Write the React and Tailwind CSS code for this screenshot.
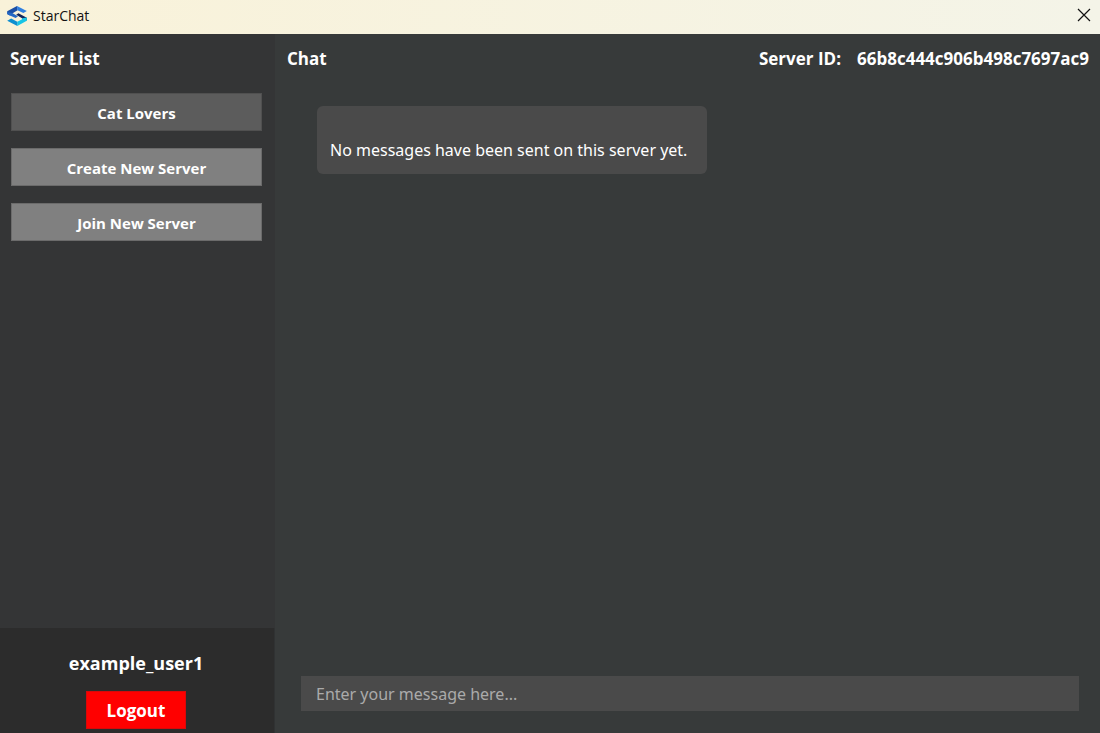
import { useState } from "react";

function Logo() {
  return (
    <svg viewBox="0 0 20 20" className="h-5 w-5" aria-hidden="true">
      <path d="M10 0L0.2 5.2V8L3 9.6L5.2 8.4V7.4L10.6 4.2Z" fill="#1c50a6" />
      <path d="M10 0L19.8 4.9L16.4 6.9L10.4 4.2Z" fill="#2f7fe0" />
      <path d="M0.2 6L5.2 7L11 10.2L8.6 12L0.6 8.4Z" fill="#2468c4" />
      <path d="M19.8 14.4V11.7L11.4 7.3L9.2 8.8L15.4 12.4V13.4Z" fill="#12265c" />
      <path d="M15.2 12.2L19.8 11.6V14.8L10.3 20V15.8L15.2 13.2Z" fill="#17c5e6" />
      <path d="M0.2 14.8L4.2 12.6L10.3 15.8V20Z" fill="#0e8fd0" />
    </svg>
  );
}

function TitleBar() {
  return (
    <header className="flex h-[34px] shrink-0 items-center justify-between bg-linear-to-r from-[#f9f2d9] to-[#f4f4e8] pl-[7px] pr-2 text-[#111111]">
      <div className="flex items-center gap-1.5 pb-0.5">
        <Logo />
        <span className="text-sm leading-5">StarChat</span>
      </div>
      <button type="button" aria-label="Close" className="pb-1">
        <svg viewBox="0 0 16 16" className="h-4 w-4" fill="none" stroke="currentColor" strokeWidth="1.2">
          <path d="M2 2L14 14M14 2L2 14" />
        </svg>
      </button>
    </header>
  );
}

function ServerButton({ label, active }) {
  return (
    <button
      type="button"
      className={`h-[38px] w-full border pt-0.5 text-[15px] font-bold ${
        active ? "border-[#505050] bg-[#5c5c5c]" : "border-[#6b6b6b] bg-[#808080]"
      }`}
    >
      {label}
    </button>
  );
}

function Sidebar() {
  return (
    <aside className="flex w-1/4 flex-col bg-[#343536]">
      <h2 className="px-2.5 pt-[13px] text-[17px] leading-6 font-bold">Server List</h2>
      <nav className="flex flex-col gap-[17px] pt-[22px] pr-[13px] pl-[11px]">
        <ServerButton label="Cat Lovers" active />
        <ServerButton label="Create New Server" />
        <ServerButton label="Join New Server" />
      </nav>
      <div className="mt-auto flex flex-col items-center gap-4 border-r border-[#303233] bg-[#2c2c2c] pt-[23px] pr-0.5 pb-1">
        <p className="text-lg leading-6 font-bold">example_user1</p>
        <button type="button" className="h-[38px] w-[100px] border border-[#d90909] bg-[#ff0000] pt-0.5 text-[17px] font-bold">
          Logout
        </button>
      </div>
    </aside>
  );
}

function Chat() {
  const [message, setMessage] = useState("");
  return (
    <main className="flex min-w-0 flex-1 flex-col bg-[#373a3a]">
      <div className="flex justify-between pt-[13px] pr-[11px] pl-3 text-[17px] leading-6 font-bold">
        <h1>Chat</h1>
        <p className="flex gap-4">
          <span>Server ID:</span>
          <span>66b8c444c906b498c7697ac9</span>
        </p>
      </div>
      <section className="flex-1 px-[42px] pt-[35px] font-['Noto_Sans',sans-serif]">
        <p className="w-fit min-w-[390px] rounded-md bg-[#4a4a4a] px-[13px] pt-8 pb-3 text-base leading-6">
          No messages have been sent on this server yet.
        </p>
      </section>
      <form className="pr-[21px] pb-[22px] pl-[26px]" onSubmit={(event) => event.preventDefault()}>
        <input
          type="text"
          aria-label="Message"
          placeholder="Enter your message here..."
          value={message}
          onChange={(event) => setMessage(event.target.value)}
          className="block h-[35px] w-full bg-[#4a4a4a] px-[15px] font-['Noto_Sans',sans-serif] text-base outline-none placeholder:text-[#aaaaaa]"
        />
      </form>
    </main>
  );
}

export default function App() {
  return (
    <div className="flex min-h-screen flex-col font-['Open_Sans','Noto_Sans',sans-serif] text-white">
      <TitleBar />
      <div className="flex flex-1">
        <Sidebar />
        <Chat />
      </div>
    </div>
  );
}
